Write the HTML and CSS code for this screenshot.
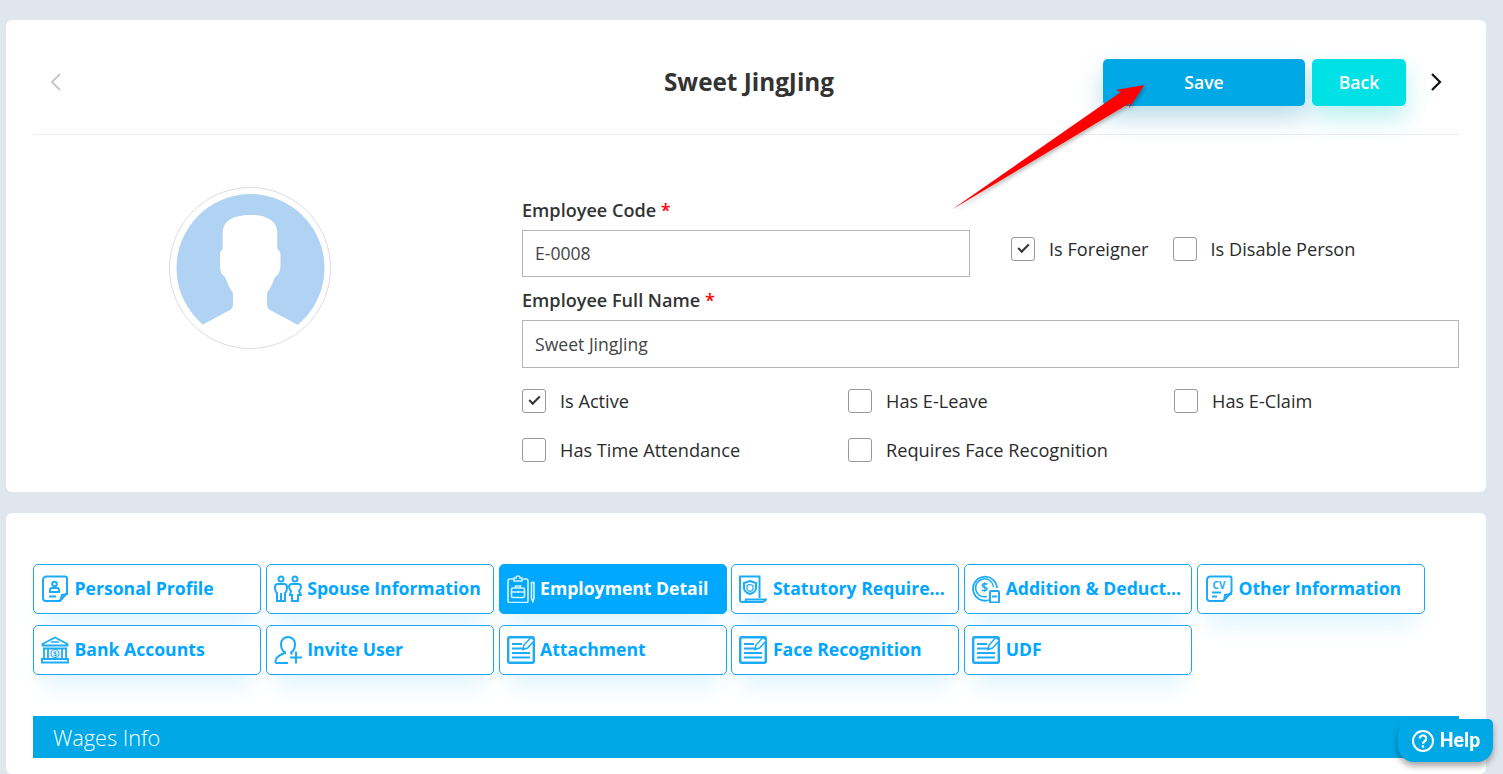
FILE: index.html
```html
<!DOCTYPE html>
<html lang="en">
<head>
    <meta charset="UTF-8">
    <meta name="viewport" content="width=device-width, initial-scale=1.0">
    <title>Sweet JingJing</title>
    <link rel="stylesheet" href="styles.css">
</head>
<body>
    <svg class="defs" width="0" height="0">
        <symbol id="note" viewBox="0 0 28 28">
            <rect x="1.200" y="1.200" width="25.600" height="25.600" rx="1.500" fill="none" stroke="currentColor" stroke-width="2.400"/>
            <path d="M5 8h10M5 12.500h11M5 17h18M5 21.500h18" fill="none" stroke="currentColor" stroke-width="2.200"/>
            <path d="M16 13.500l1-4.500L24 1.500l3.500 3L20.500 12z" fill="#fff" stroke="currentColor" stroke-width="1.500"/>
        </symbol>
    </svg>

    <section class="card top-card">
        <header class="head">
            <svg class="nav-arrow" width="14" height="20" viewBox="0 0 14 20"><path d="M11 2L3 10l8 8" fill="none" stroke="#c4c8cc" stroke-width="2"/></svg>
            <h1>Sweet JingJing</h1>
            <div class="head-actions">
                <button class="btn btn-save">Save</button>
                <button class="btn btn-back">Back</button>
                <svg class="nav-next" width="14" height="20" viewBox="0 0 14 20"><path d="M3 2l8 8-8 8" fill="none" stroke="#111" stroke-width="2.200"/></svg>
            </div>
        </header>

        <div class="profile">
            <div class="avatar-col">
                <div class="avatar">
                    <svg width="150" height="150" viewBox="0 0 150 150">
                        <circle cx="75.500" cy="75" r="74" fill="#b0d3f4"/>
                        <path d="M27 132L55 117Q58 115 58 111V100Q53 93 50 84Q45 81 45 72V62Q45 58 47.700 56V40C47.700 28 58 22 75 22C92 22 102.300 28 102.300 40V56Q105.500 58 105.500 62V72Q105.500 81 100 84Q97 93 92 100V111Q92 115 95 117L123 132Q100 150 75 150Q50 150 27 132Z" fill="#fff"/>
                    </svg>
                </div>
            </div>
            <div class="fields">
                <label class="field-label">Employee Code <span class="req">*</span></label>
                <div class="code-row">
                    <input class="text-input code-input" type="text" value="E-0008">
                    <div class="checks-inline">
                        <span class="check"><span class="box on"></span>Is Foreigner</span>
                        <span class="check"><span class="box"></span>Is Disable Person</span>
                    </div>
                </div>
                <label class="field-label name-label">Employee Full Name <span class="req">*</span></label>
                <input class="text-input" type="text" value="Sweet JingJing">
                <div class="check-grid">
                    <span class="check"><span class="box on"></span>Is Active</span>
                    <span class="check"><span class="box"></span>Has E-Leave</span>
                    <span class="check"><span class="box"></span>Has E-Claim</span>
                    <span class="check"><span class="box"></span>Has Time Attendance</span>
                    <span class="check"><span class="box"></span>Requires Face Recognition</span>
                </div>
            </div>
        </div>
    </section>

    <section class="card tabs-card">
        <nav class="tabs">
            <a class="tab">
                <svg class="tab-icon" viewBox="0 0 28 28" fill="none" stroke="currentColor" stroke-width="2">
                    <path d="M6 1.500h18a2 2 0 0 1 2 2V18l-7 8H5a3 3 0 0 1-3-3V5a3.500 3.500 0 0 1 4-3.500z"/>
                    <circle cx="13.500" cy="9" r="2.300"/>
                    <path d="M9 17v-2a2 2 0 0 1 2-2h5a2 2 0 0 1 2 2v2z"/>
                    <path d="M8 21.500h7M19 26l2-6 6-1"/>
                </svg>
                <span class="tab-text">Personal Profile</span>
            </a>
            <a class="tab">
                <svg class="tab-icon" viewBox="0 0 28 28" fill="none" stroke="currentColor" stroke-width="2">
                    <circle cx="7" cy="4" r="2.500"/><circle cx="21" cy="4" r="2.500"/>
                    <path d="M4 9h6a3 3 0 0 1 3 3c0 3-.5 5-2 6v8H3v-8c-1.500-1-2-3-2-6a3 3 0 0 1 3-3z"/>
                    <path d="M7 18v8M18 9h6a3 3 0 0 1 3 3c0 2-1 3-2 4l2 4h-3v6h-6v-6h-2l1-4c-1-1-2-2-2-4a3 3 0 0 1 3-3z"/>
                </svg>
                <span class="tab-text">Spouse Information</span>
            </a>
            <a class="tab active">
                <svg class="tab-icon" viewBox="0 0 28 28" fill="none" stroke="#d5f0ff" stroke-width="1.600">
                    <path d="M6 4H3a2 2 0 0 0-2 2v20a1.500 1.500 0 0 0 1.500 1.500h17a1.500 1.500 0 0 0 1.500-1.500V6a2 2 0 0 0-2-2h-3"/>
                    <path d="M7 6V3h2a2 2 0 0 1 4 0h2v3z"/>
                    <rect x="4.500" y="13" width="13" height="9.500" rx="1.500"/>
                    <path d="M8.500 13v-2h5v2M4.500 17h13M11 16v2"/>
                    <path d="M24.500 7.500h2.500v16l-1.200 3-1.300-3z"/>
                </svg>
                <span class="tab-text">Employment Detail</span>
            </a>
            <a class="tab">
                <svg class="tab-icon" viewBox="0 0 28 28" fill="none" stroke="currentColor" stroke-width="2">
                    <path d="M3 27a2 2 0 0 1-2-2V1.500h19.500V23"/>
                    <path d="M3 27h20q3 0 4-2.500H7q0 2.500-4 2.500z"/>
                    <path d="M11 6l6 2v5c0 3-3 5-6 6-3-1-6-3-6-6V8z"/>
                    <path d="M11 9.500l3 1v3c0 1.500-1.500 2.500-3 3-1.500-.5-3-1.500-3-3v-3z" stroke-width="1.200"/>
                </svg>
                <span class="tab-text">Statutory Require...</span>
            </a>
            <a class="tab">
                <svg class="tab-icon" viewBox="0 0 28 28" fill="none" stroke="currentColor" stroke-width="1.800">
                    <path d="M17 25A12 12 0 1 1 25 13"/>
                    <path d="M15 21.500A9 9 0 1 1 21.500 12" stroke-width="1.500"/>
                    <text x="12.500" y="16.500" class="icon-glyph" fill="currentColor" stroke="none">$</text>
                    <rect x="18" y="16" width="9" height="11.500" rx="1" fill="#fff" stroke-width="2"/>
                    <path d="M20 21.500h5" stroke-width="2"/>
                </svg>
                <span class="tab-text">Addition &amp; Deduct...</span>
            </a>
            <a class="tab">
                <svg class="tab-icon" viewBox="0 0 28 28" fill="none" stroke="currentColor" stroke-width="2">
                    <path d="M5 1.500h20a1.500 1.500 0 0 1 1.500 1.500V17l-8 9H5a3 3 0 0 1-3-3V5a3.500 3.500 0 0 1 3-3.500z"/>
                    <text x="14" y="13.500" class="icon-glyph cv" fill="currentColor" stroke="none">CV</text>
                    <path d="M7 17.500h9M7 21.500h5M19 26l1-6 7-1"/>
                </svg>
                <span class="tab-text">Other Information</span>
            </a>
            <a class="tab">
                <svg class="tab-icon" viewBox="0 0 28 28" fill="none" stroke="currentColor" stroke-width="1.800">
                    <path d="M14 1.500L26.500 8v1.500h-25V8z"/>
                    <path d="M2 12.500h24M3 12.500v10M7 12.500v10M21 12.500v10M25 12.500v10M1 23h26v3.500H1z"/>
                    <path d="M10 6h8" stroke-width="1.500"/>
                    <circle cx="14" cy="17.500" r="4" stroke-width="1.200"/>
                    <text x="14" y="20" class="icon-glyph small" fill="currentColor" stroke="none">$</text>
                </svg>
                <span class="tab-text">Bank Accounts</span>
            </a>
            <a class="tab">
                <svg class="tab-icon" viewBox="0 0 28 28" fill="none" stroke="currentColor" stroke-width="2">
                    <path d="M12 17.500c-1 0-.5-1-1.500-1.500C8 14.500 7 12 7 8a7 7 0 0 1 14 0c0 4-1 6.500-3.500 8-1 .5-.5 1.500 1 2"/>
                    <path d="M1.500 27v-2c0-4 4-6 9-8M1.500 27H14M22 15.500v12M16 21.500h12"/>
                </svg>
                <span class="tab-text">Invite User</span>
            </a>
            <a class="tab"><svg class="tab-icon"><use href="#note"/></svg><span class="tab-text">Attachment</span></a>
            <a class="tab"><svg class="tab-icon"><use href="#note"/></svg><span class="tab-text">Face Recognition</span></a>
            <a class="tab"><svg class="tab-icon"><use href="#note"/></svg><span class="tab-text">UDF</span></a>
        </nav>

        <h2 class="section-bar">Wages Info</h2>
    </section>

    <!-- annotation arrow from the screenshot -->
    <svg class="annotation" width="1503" height="774" viewBox="0 0 1503 774">
        <defs>
            <filter id="arrow-shadow" x="-10%" y="-10%" width="120%" height="120%">
                <feDropShadow dx="1" dy="2" stdDeviation="2" flood-color="#000" flood-opacity="0.3"/>
            </filter>
        </defs>
        <path d="M952 209.500L1121 92L1116 90L1144.500 85L1129 108L1130 103Z" fill="#f00" filter="url(#arrow-shadow)"/>
    </svg>

    <button class="help">
        <svg width="24" height="24" viewBox="0 0 24 24" fill="none" stroke="#fff" stroke-width="2">
            <circle cx="12" cy="12" r="10"/>
            <path d="M8.800 9.500a3.200 3.200 0 1 1 4.800 2.800c-1 .6-1.600 1.200-1.600 2.400" stroke-width="2.200"/>
            <circle cx="12" cy="17.500" r="1.300" fill="#fff" stroke="none"/>
        </svg>
        Help
    </button>
</body>
</html>
```
FILE: styles.css
```css
body {
    font-family: "Open Sans", Arial, sans-serif;
    margin: 0;
    padding: 20px 17px 0 6px;
    box-sizing: border-box;
    height: 774px;
    overflow: hidden;
    background-color: #dfe6ee;
    color: #333;
}

.defs {
    position: absolute;
}

.card {
    background-color: #fff;
    border-radius: 6px;
    padding: 0 27px;
}

.top-card {
    height: 472px;
}

.tabs-card {
    margin-top: 21px;
    height: 261px;
    padding-top: 51px;
    box-sizing: border-box;
}

/* header */

.head {
    display: grid;
    grid-template-columns: 1fr auto 1fr;
    align-items: center;
    box-sizing: border-box;
    height: 115px;
    padding-top: 11px;
    border-bottom: 1px solid #eaedf0;
}

.nav-arrow {
    margin-left: 16px;
    margin-top: -2px;
}

.head h1 {
    margin: -2px 0 0;
    padding-left: 6px;
    text-align: center;
    font-size: 24.300px;
    font-weight: 700;
    color: #333;
}

.head-actions {
    display: flex;
    align-items: center;
    justify-content: flex-end;
    gap: 7px;
    padding-right: 16px;
}

.btn {
    height: 47px;
    padding: 0 0 2px;
    border: none;
    border-radius: 5px;
    color: #fff;
    font-family: inherit;
    font-size: 17.600px;
    font-weight: 600;
}

.btn-save {
    width: 202px;
    background-color: #00a8e6;
    box-shadow: 0 12px 24px rgba(0, 130, 180, 0.28);
}

.btn-back {
    width: 94px;
    background-color: #00e1e6;
    box-shadow: 0 12px 24px rgba(0, 200, 205, 0.28);
}

.nav-next {
    margin-left: 16px;
    margin-top: -2px;
}

/* profile form */

.profile {
    display: flex;
}

.avatar-col {
    width: 489px;
    flex-shrink: 0;
    padding: 52px 0 0 136px;
    box-sizing: border-box;
}

.avatar {
    width: 162px;
    height: 162px;
    box-sizing: border-box;
    border: 1px solid #ddd;
    border-radius: 50%;
    display: flex;
    align-items: center;
    justify-content: center;
    overflow: hidden;
}

.avatar svg {
    display: block;
}

.fields {
    flex: 1;
    padding-top: 63px;
}

.field-label {
    display: block;
    font-size: 18.100px;
    font-weight: 600;
    line-height: 24px;
    color: #333;
    margin-bottom: 8px;
}

.name-label {
    margin-top: 11px;
}

.req {
    color: #f00;
}

.code-row {
    display: flex;
    align-items: center;
}

.text-input {
    display: block;
    box-sizing: border-box;
    width: 100%;
    height: 48px;
    padding: 0 12px;
    border: 1px solid #b5b5b5;
    font-family: inherit;
    font-size: 17.600px;
    color: #444;
    background: #fff;
}

.code-input {
    width: 448px;
    height: 47px;
    padding-bottom: 2px;
    flex-shrink: 0;
}

.checks-inline {
    display: flex;
    gap: 24px;
    margin-left: 41px;
    margin-top: -9px;
}

.check {
    display: flex;
    align-items: center;
    gap: 14px;
    font-size: 18.160px;
    font-weight: 500;
    color: #2b2b2b;
}

.box {
    width: 24px;
    height: 24px;
    box-sizing: border-box;
    border: 1px solid #999;
    border-radius: 3px;
    position: relative;
}

.box.on::after {
    content: "";
    position: absolute;
    left: 6px;
    top: 6px;
    width: 9px;
    height: 4px;
    border-left: 2px solid #333;
    border-bottom: 2px solid #333;
    transform: rotate(-45deg);
}

.check-grid {
    display: grid;
    grid-template-columns: 326px 326px 1fr;
    grid-auto-rows: 49px;
    align-items: center;
    margin-top: 8px;
}

/* tabs */

.tabs {
    display: grid;
    grid-template-columns: repeat(6, 228px);
    grid-template-rows: 50.400px 50.600px;
    column-gap: 4.800px;
    row-gap: 10.500px;
}

.tab {
    display: flex;
    align-items: center;
    gap: 5.500px;
    box-sizing: border-box;
    padding: 0 7px;
    border: 1px solid #1aa7f0;
    border-radius: 5px;
    background-color: #fff;
    color: #00a6ff;
    box-shadow: 0 20px 25px -10px rgba(0, 168, 255, 0.14);
    min-width: 0;
}

.tab.active {
    background-color: #00a8ff;
    border-color: #00a8ff;
    color: #fff;
}

.tab-icon {
    width: 28px;
    height: 28px;
    flex-shrink: 0;
    color: #1dabf8;
}

.tab-text {
    font-size: 17.600px;
    font-weight: 700;
    margin-bottom: 2px;
    white-space: nowrap;
}

.icon-glyph {
    font-family: "Open Sans", Arial, sans-serif;
    font-size: 12px;
    font-weight: 700;
    text-anchor: middle;
}

.icon-glyph.cv {
    font-size: 10px;
}

.icon-glyph.small {
    font-size: 7px;
}

.section-bar {
    margin: 40.500px 0 0;
    height: 42px;
    line-height: 43px;
    padding-left: 20px;
    background-color: #00a8e6;
    color: #fff;
    font-size: 21.700px;
    font-weight: 300;
}

/* overlays */

.annotation {
    position: absolute;
    left: 0;
    top: 0;
    pointer-events: none;
}

.help {
    position: fixed;
    left: 1398px;
    top: 719px;
    width: 95px;
    height: 43px;
    display: flex;
    align-items: center;
    justify-content: center;
    gap: 5px;
    padding: 0;
    border: none;
    border-radius: 16px 5px 16px 16px;
    background-color: #00a8e6;
    color: #fff;
    font-family: Roboto, Arial, sans-serif;
    font-size: 19.500px;
    font-weight: 700;
    box-shadow: 0 4px 6px rgba(0, 0, 0, 0.35);
}
```
